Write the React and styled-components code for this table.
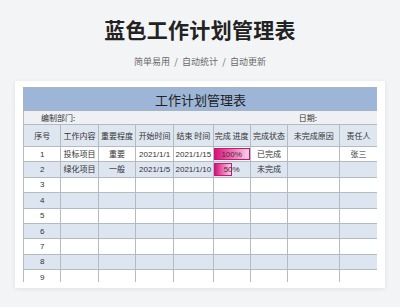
import React from "react";
import styled, { createGlobalStyle } from "styled-components";

const Global = createGlobalStyle`
  html, body { margin: 0; padding: 0; background: #f3f4f6; }
  body { font-family: "Liberation Sans", "Noto Sans CJK SC", sans-serif; }
`;

const Page = styled.div`
  width: 400px;
  height: 307px;
  display: flex;
  flex-direction: column;
  align-items: center;
  overflow: hidden;
`;

const Title = styled.h1`
  margin: 17px 0 0;
  font-family: "Noto Sans CJK SC", sans-serif;
  font-size: 21px;
  line-height: 24px;
  font-weight: 700;
  color: #222;
  letter-spacing: 0.3px;
`;

const Subtitle = styled.div`
  margin-top: 14px;
  font-family: "Noto Sans CJK SC", sans-serif;
  font-size: 9px;
  line-height: 14px;
  color: #6a6a6a;
  word-spacing: 2.2px;
`;

const Card = styled.div`
  margin-top: 12px;
  width: 370px;
  height: 207px;
  box-sizing: border-box;
  padding: 6px 8px 6px;
  background: #fff;
  box-shadow: 0 1px 5px rgba(0, 0, 0, 0.08);
  overflow: hidden;
`;

const Clip = styled.div`
  width: 354px;
  height: 195px;
  overflow: hidden;
`;

const Table = styled.table`
  width: 354px;
  border-collapse: collapse;
  table-layout: fixed;
  font-family: "Liberation Sans", "Noto Sans CJK SC", sans-serif;
  font-size: 8px;
  color: #333;
`;

const TitleCell = styled.td`
  height: 22px;
  padding: 0;
  background: #9db6d7;
  text-align: center;
  font-family: "Noto Sans CJK SC", sans-serif;
  font-size: 13px;
  color: #222;
  border: 1px solid #a9b2bd;
`;

const InfoCell = styled.td`
  height: 13px;
  padding: 0 0 0 ${(p) => p.$pad || 0}px;
  background: #eef0f3;
  font-family: "Noto Sans CJK SC", sans-serif;
  font-size: 8px;
  color: #333;
  line-height: 13px;
  border-left: ${(p) => (p.$first ? "1px solid #b5bac1" : "none")};
  border-right: ${(p) => (p.$last ? "1px solid #b5bac1" : "none")};
`;

const HeadCell = styled.th`
  height: 21px;
  padding: 0;
  background: #dee6ef;
  font-weight: 400;
  font-family: "Noto Sans CJK SC", sans-serif;
  font-size: 8px;
  color: #333;
  text-align: center;
  white-space: nowrap;
  border: 1px solid #b5bac1;
`;

const Row = styled.tr`
  background: ${(p) => (p.$alt ? "#dce5f0" : "#fff")};
`;

const Cell = styled.td`
  height: 14.4px;
  padding: 0;
  text-align: center;
  white-space: nowrap;
  border: 1px solid #b5bac1;
  line-height: 13px;
  font-size: 8px;
  overflow: hidden;
`;

const ProgressCell = styled(Cell)`
  position: relative;
`;

const Bar = styled.div`
  position: absolute;
  left: 0;
  top: 1px;
  bottom: 1px;
  box-sizing: border-box;
  border: 1px solid #cf1479;
  background: linear-gradient(to right, #d31479 0%, #ea7ab5 55%, #f8d4e6 100%);
`;

const BarLabel = styled.span`
  position: relative;
  color: #5a2440;
`;

const cols = [37.3, 37.4, 37.6, 37.7, 39.7, 37, 37.6, 52, 37.7];
const headers = ["序号", "工作内容", "重要程度", "开始时间", "结束 时间", "完成 进度", "完成状态", "未完成原因", "责任人"];

const data = [
  ["1", "投标项目", "重要", "2021/1/1", "2021/1/15", 100, "已完成", "", "张三"],
  ["2", "绿化项目", "一般", "2021/1/5", "2021/1/10", 50, "未完成", "", ""],
];

export default function App() {
  const rows = [];
  for (let i = 1; i <= 9; i++) {
    const d = data[i - 1] || [String(i), "", "", "", "", null, "", "", ""];
    rows.push(d);
  }
  return (
    <Page>
      <Global />
      <Title>蓝色工作计划管理表</Title>
      <Subtitle>简单易用 / 自动统计 / 自动更新</Subtitle>
      <Card>
        <Clip>
          <Table>
            <colgroup>
              {cols.map((w, i) => (
                <col key={i} style={{ width: w }} />
              ))}
            </colgroup>
            <tbody>
              <tr>
                <TitleCell colSpan={9}>工作计划管理表</TitleCell>
              </tr>
              <tr>
                <InfoCell colSpan={4} $first $pad={17}>编制部门:</InfoCell>
                <InfoCell colSpan={3} />
                <InfoCell colSpan={2} $last $pad={11}>日期:</InfoCell>
              </tr>
              <tr>
                {headers.map((h) => (
                  <HeadCell key={h}>{h}</HeadCell>
                ))}
              </tr>
              {rows.map((r, idx) => (
                <Row key={idx} $alt={idx % 2 === 1}>
                  {r.map((v, ci) =>
                    ci === 5 ? (
                      <ProgressCell key={ci}>
                        {v != null && (
                          <>
                            <Bar style={{ width: `${v}%` }} />
                            <BarLabel>{v}%</BarLabel>
                          </>
                        )}
                      </ProgressCell>
                    ) : (
                      <Cell key={ci}>{v}</Cell>
                    )
                  )}
                </Row>
              ))}
            </tbody>
          </Table>
        </Clip>
      </Card>
    </Page>
  );
}
